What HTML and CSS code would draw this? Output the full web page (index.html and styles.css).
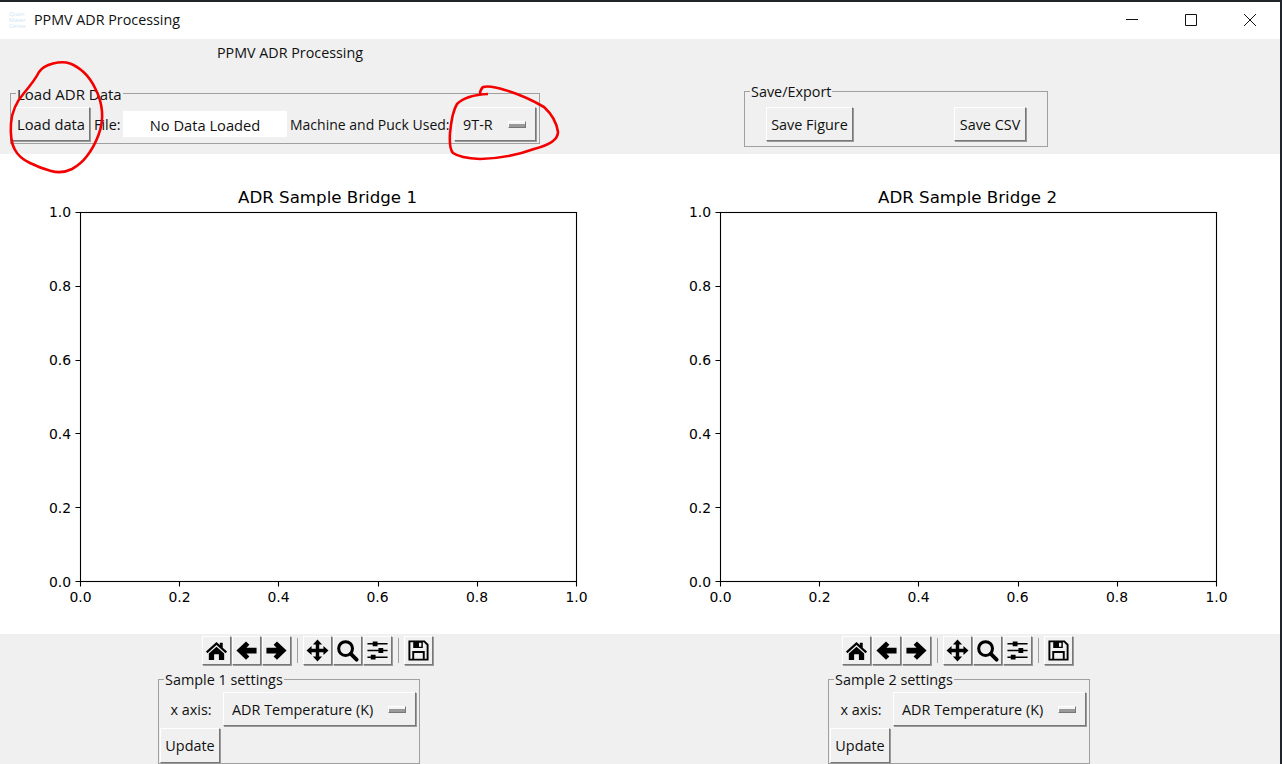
FILE: index.html
```html
<!DOCTYPE html>
<html lang="en">
<head>
  <meta charset="UTF-8" />
  <title>PPMV ADR Processing</title>
  <link rel="stylesheet" href="styles.css">
</head>
<body>

  <svg class="icon-defs" aria-hidden="true">
    <symbol id="i-home" viewBox="0 0 24 24">
      <path d="M12 3L15.5 6.2V4H18.5V9L23 13L21.5 14.8L12 6.2L2.5 14.8L1 13Z M12 8L20 15.2V22H14.5V16H9.5V22H4V15.2Z"/>
    </symbol>
    <symbol id="i-back" viewBox="0 0 24 24">
      <path d="M11.5 2.5L15 6L12 9H22.5V15.2H12L15 18.2L11.5 21.7L1.5 12.1Z"/>
    </symbol>
    <symbol id="i-forward" viewBox="0 0 24 24">
      <path d="M12.5 2.5L9 6L12 9H1.5V15.2H12L9 18.2L12.5 21.7L22.5 12.1Z"/>
    </symbol>
    <symbol id="i-move" viewBox="0 0 24 24">
      <path d="M12 .5L16.8 5.8H13.8V10.2H18.2V7.2L23.5 12L18.2 16.8V13.8H13.8V18.2H16.8L12 23.5L7.2 18.2H10.2V13.8H5.8V16.8L.5 12L5.8 7.2V10.2H10.2V5.8H7.2Z"/>
    </symbol>
    <symbol id="i-zoom" viewBox="0 0 24 24">
      <circle cx="10" cy="10" r="7.2" fill="none" stroke="#000" stroke-width="3.2"/>
      <path d="M15.5 15.5L21.5 21.5" fill="none" stroke="#000" stroke-width="4" stroke-linecap="round"/>
    </symbol>
    <symbol id="i-config" viewBox="0 0 24 24">
      <path d="M1.5 5H22.5M1.5 12H22.5M1.5 19H22.5" fill="none" stroke="#000" stroke-width="1.6"/>
      <path d="M7 2.5H12V7.5H7ZM13 9.5H18V14.5H13ZM5 16.5H10V21.5H5Z"/>
    </symbol>
    <symbol id="i-save" viewBox="0 0 24 24">
      <path d="M2.5 2.5H18L21.5 6V21.5H2.5Z M6.5 21.5V13.5H17.5V21.5" fill="none" stroke="#000" stroke-width="2"/>
      <path d="M6.5 2.5H16.5V9.5H6.5ZM12.5 4V8H15V4Z" fill-rule="evenodd"/>
    </symbol>
  </svg>

  <div class="window">

    <div class="titlebar">
      <div class="app-logo"><span>Quan</span><span>Mater</span><span>Cente</span></div>
      <div class="app-title">PPMV ADR Processing</div>
      <div class="win-controls">
        <svg class="win-btn" viewBox="0 0 14 14"><path d="M1 6.5H13"/></svg>
        <svg class="win-btn" viewBox="0 0 14 14"><path d="M1.5 1.5H12.5V12.5H1.5Z"/></svg>
        <svg class="win-btn" viewBox="0 0 14 14"><path d="M1 1L13 13M13 1L1 13"/></svg>
      </div>
    </div>

    <div class="topband">
      <div class="heading">PPMV ADR Processing</div>
      <div class="toprow">
        <fieldset class="group load-group">
          <legend>Load ADR Data</legend>
          <div class="group-row">
            <button class="btn load-btn">Load data</button>
            <label class="file-label">File:</label>
            <div class="file-entry">No Data Loaded</div>
            <label class="machine-label">Machine and Puck Used:</label>
            <div class="option machine-option">9T-R<span class="indicator"></span></div>
          </div>
        </fieldset>
        <fieldset class="group export-group">
          <legend>Save/Export</legend>
          <div class="group-row export-row">
            <button class="btn save-fig">Save Figure</button>
            <button class="btn save-csv">Save CSV</button>
          </div>
        </fieldset>
      </div>
    </div>

    <div class="plots">
      <svg class="figure" viewBox="0 0 640 480">
        <text class="fig-title" x="327.5" y="49">ADR Sample Bridge 1</text>
        <rect class="axes" x="80.5" y="58.5" width="496" height="369"/>
        <path class="ticks" d="M80.5 427.5v5M179.5 427.5v5M278.5 427.5v5M378.5 427.5v5M477.5 427.5v5M576.5 427.5v5M80.5 427.5h-5M80.5 353.5h-5M80.5 279.5h-5M80.5 206.5h-5M80.5 132.5h-5M80.5 58.5h-5"/>
        <text class="xtick" x="80.5" y="448">0.0</text>
        <text class="xtick" x="179.5" y="448">0.2</text>
        <text class="xtick" x="278.5" y="448">0.4</text>
        <text class="xtick" x="377.5" y="448">0.6</text>
        <text class="xtick" x="477" y="448">0.8</text>
        <text class="xtick" x="576.5" y="448">1.0</text>
        <text class="ytick" x="71" y="432.5">0.0</text>
        <text class="ytick" x="71" y="358.5">0.2</text>
        <text class="ytick" x="71" y="284.5">0.4</text>
        <text class="ytick" x="71" y="211">0.6</text>
        <text class="ytick" x="71" y="137">0.8</text>
        <text class="ytick" x="71" y="63">1.0</text>
      </svg>
      <svg class="figure" viewBox="0 0 640 480">
        <text class="fig-title" x="327.5" y="49">ADR Sample Bridge 2</text>
        <rect class="axes" x="80.5" y="58.5" width="496" height="369"/>
        <path class="ticks" d="M80.5 427.5v5M179.5 427.5v5M278.5 427.5v5M378.5 427.5v5M477.5 427.5v5M576.5 427.5v5M80.5 427.5h-5M80.5 353.5h-5M80.5 279.5h-5M80.5 206.5h-5M80.5 132.5h-5M80.5 58.5h-5"/>
        <text class="xtick" x="80.5" y="448">0.0</text>
        <text class="xtick" x="179.5" y="448">0.2</text>
        <text class="xtick" x="278.5" y="448">0.4</text>
        <text class="xtick" x="377.5" y="448">0.6</text>
        <text class="xtick" x="477" y="448">0.8</text>
        <text class="xtick" x="576.5" y="448">1.0</text>
        <text class="ytick" x="71" y="432.5">0.0</text>
        <text class="ytick" x="71" y="358.5">0.2</text>
        <text class="ytick" x="71" y="284.5">0.4</text>
        <text class="ytick" x="71" y="211">0.6</text>
        <text class="ytick" x="71" y="137">0.8</text>
        <text class="ytick" x="71" y="63">1.0</text>
      </svg>
    </div>

    <div class="bottomband">
      <div class="plot-tools">
        <div class="toolbar">
          <button class="tool"><svg><use href="#i-home"/></svg></button>
          <button class="tool"><svg><use href="#i-back"/></svg></button>
          <button class="tool"><svg><use href="#i-forward"/></svg></button>
          <span class="tool-sep"></span>
          <button class="tool"><svg><use href="#i-move"/></svg></button>
          <button class="tool"><svg><use href="#i-zoom"/></svg></button>
          <button class="tool"><svg><use href="#i-config"/></svg></button>
          <span class="tool-sep"></span>
          <button class="tool"><svg><use href="#i-save"/></svg></button>
        </div>
        <fieldset class="group settings sample-1">
          <legend>Sample 1 settings</legend>
          <div class="axis-row">
            <label class="axis-label">x axis:</label>
            <div class="option axis-option">ADR Temperature (K)<span class="indicator"></span></div>
          </div>
          <button class="btn update-btn">Update</button>
        </fieldset>
      </div>
      <div class="plot-tools">
        <div class="toolbar">
          <button class="tool"><svg><use href="#i-home"/></svg></button>
          <button class="tool"><svg><use href="#i-back"/></svg></button>
          <button class="tool"><svg><use href="#i-forward"/></svg></button>
          <span class="tool-sep"></span>
          <button class="tool"><svg><use href="#i-move"/></svg></button>
          <button class="tool"><svg><use href="#i-zoom"/></svg></button>
          <button class="tool"><svg><use href="#i-config"/></svg></button>
          <span class="tool-sep"></span>
          <button class="tool"><svg><use href="#i-save"/></svg></button>
        </div>
        <fieldset class="group settings sample-2">
          <legend>Sample 2 settings</legend>
          <div class="axis-row">
            <label class="axis-label">x axis:</label>
            <div class="option axis-option">ADR Temperature (K)<span class="indicator"></span></div>
          </div>
          <button class="btn update-btn">Update</button>
        </fieldset>
      </div>
    </div>

    <!-- red marker circles drawn over the screenshot -->
    <svg class="markup" viewBox="0 0 1280 762">
      <g transform="translate(0 -2)">
        <path d="M39 72Q35 80 24 93Q12 107 11 123.5Q10 141 14.5 149Q19 158 30 163Q40 168 51 171Q62 174 72 169Q81 164 87 156Q94 147 98.5 135Q103 123 102 111.5Q101 100 96 90Q91 79 84 72.5Q77 66 70 63.5Q63 61 53 63.5Q43 66 39 72Z"/>
        <path d="M488 94Q466 95 457 104Q452 112 450 133Q449 149 453 153Q460 158 480 159Q510 158 534 149Q558 143 558 132Q556 118 544 107Q525 96 505 90Q490 85 483 87Q480 90 480 94"/>
      </g>
    </svg>

  </div>
</body>
</html>
```

FILE: styles.css
```css
* {
  box-sizing: border-box;
}
html,
body {
  margin: 0;
  height: 100%;
  overflow: hidden;
}
body {
  background: #1f252b;
  font-family: "Open Sans", sans-serif;
  font-size: 14.4px;
  color: #111;
}
.icon-defs {
  position: absolute;
  width: 0;
  height: 0;
}
.window {
  position: relative;
  width: 1280px;
  height: 762px;
  margin-top: 2px;
  background: #fff;
  overflow: hidden;
}

/* title bar */
.titlebar {
  display: flex;
  align-items: center;
  height: 37px;
  padding: 0 0 2px 9px;
}
.app-logo {
  display: flex;
  flex-direction: column;
  width: 20px;
  margin-right: 5px;
  font-size: 6px;
  line-height: 6px;
  color: #cfe5f5;
}
.app-title {
  font-size: 14.3px;
}
.win-controls {
  display: flex;
  margin-left: auto;
  padding-right: 23px;
  gap: 45px;
}
.win-btn {
  width: 14px;
  height: 14px;
  fill: none;
  stroke: #111;
  stroke-width: 1;
}

/* top controls */
.topband {
  height: 115px;
  background: #f0f0f0;
  padding-top: 4px;
}
.heading {
  margin-left: 217px;
  font-size: 14.3px;
  line-height: 20px;
}
.toprow {
  display: flex;
  align-items: flex-start;
}
.group {
  margin: 0;
  padding: 0;
  min-width: 0;
  border: 1px solid #a0a0a0;
}
.group legend {
  margin-left: 5px;
  padding: 2px 1px 0;
  line-height: 20px;
}
.group-row {
  display: flex;
  align-items: center;
}
.load-group {
  width: 530px;
  margin: 19px 0 0 10px;
  padding: 3px 0 2px;
}
.load-group legend {
  font-size: 15px;
}
.export-group {
  width: 304px;
  margin: 17px 0 0 204px;
  padding: 5px 0;
}
.export-row {
  justify-content: space-between;
  padding: 0 20px 0 21px;
}
.btn,
.tool,
.option {
  height: 34px;
  padding: 0;
  font: inherit;
  color: inherit;
  background: #f0f0f0;
  border: 1px solid;
  border-color: #fff #777 #777 #fff;
  box-shadow: 1px 1px 0 #9a9a9a;
}
.load-btn {
  width: 78px;
  margin: 0 1px;
  font-size: 14.7px;
}
.file-label {
  width: 27px;
  margin-left: 3px;
}
.file-entry {
  width: 164px;
  height: 26px;
  margin-left: 2px;
  background: #fff;
  font-size: 14.7px;
  line-height: 28px;
  text-align: center;
}
.machine-label {
  width: 164px;
  margin-left: 3px;
  font-size: 14px;
  white-space: nowrap;
}
.option {
  display: flex;
  align-items: center;
  justify-content: space-between;
  padding: 0 9px 0 8px;
  white-space: nowrap;
}
.machine-option {
  width: 82px;
}
.indicator {
  width: 18px;
  height: 7px;
  background: linear-gradient(#f4f4f4 0 40%, #999 40% 100%);
  border: 1px solid;
  border-color: #fff #777 #777 #fff;
}
.save-fig {
  width: 87px;
}
.save-csv {
  width: 72px;
  margin-right: 1px;
}

/* plots */
.plots {
  display: flex;
  height: 480px;
  background: #fff;
}
.figure {
  display: block;
  width: 640px;
  height: 480px;
  font-family: "DejaVu Sans", sans-serif;
  font-size: 13.9px;
}
.fig-title {
  font-size: 16.67px;
  text-anchor: middle;
}
.axes {
  fill: #fff;
  stroke: #000;
  stroke-width: 1.1;
}
.ticks {
  fill: none;
  stroke: #000;
  stroke-width: 1.1;
}
.xtick {
  text-anchor: middle;
}
.ytick {
  text-anchor: end;
}

/* bottom controls */
.bottomband {
  display: flex;
  height: 130px;
  background: #f0f0f0;
}
.plot-tools {
  width: 640px;
  flex-shrink: 0;
}
.toolbar {
  display: flex;
  align-items: center;
  margin: 2px 0 0 202px;
}
.tool {
  width: 29px;
  height: 29px;
  margin-right: 1px;
  flex-shrink: 0;
}
.tool svg {
  display: block;
  width: 23px;
  height: 23px;
  margin: 2px;
}
.tool-sep {
  width: 1px;
  height: 25px;
  margin: 0 5px;
  background: #a0a0a0;
}
.settings {
  width: 262px;
  margin-top: 3px;
  padding: 0;
}
.sample-1 {
  margin-left: 158px;
}
.sample-2 {
  margin-left: 188px;
}
.axis-row {
  display: flex;
  align-items: center;
  padding-top: 2px;
}
.axis-label {
  width: 64px;
  text-align: center;
}
.axis-option {
  width: 193px;
}
.update-btn {
  display: block;
  width: 60px;
  height: 35px;
  margin: 2px 0 0 1px;
}

/* red circles */
.markup {
  position: absolute;
  top: 0;
  left: 0;
  width: 1280px;
  height: 762px;
  fill: none;
  stroke: #f40000;
  stroke-width: 2.6;
  stroke-linejoin: round;
  pointer-events: none;
}
```
